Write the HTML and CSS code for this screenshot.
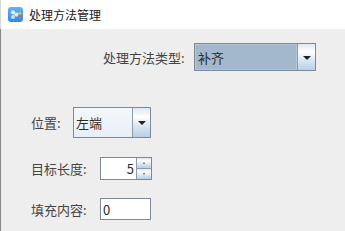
FILE: index.html
```html
<!DOCTYPE html>
<html lang="zh">
<head>
<meta charset="utf-8">
<title>处理方法管理</title>
<link rel="stylesheet" href="styles.css">
</head>
<body>
<div class="window">
  <div class="titlebar">
    <svg class="appicon" width="15" height="15" viewBox="0 0 15 15">
      <defs>
        <linearGradient id="ig" x1="0" y1="0" x2="0" y2="1">
          <stop offset="0" stop-color="#62b2f6"/>
          <stop offset="1" stop-color="#3389e2"/>
        </linearGradient>
      </defs>
      <rect x="0" y="0" width="15" height="15" rx="3" fill="url(#ig)"/>
      <circle cx="5" cy="5.3" r="2.1" fill="#ffffff" fill-opacity="0.85"/>
      <circle cx="5" cy="10" r="2.1" fill="#ffffff" fill-opacity="0.7"/>
      <circle cx="8.4" cy="7.6" r="2.1" fill="#ffffff" fill-opacity="0.8"/>
      <circle cx="11.8" cy="6.6" r="1.5" fill="#f2c230"/>
      <circle cx="12" cy="8.7" r="1.3" fill="#e9543c"/>
      <circle cx="10.6" cy="8.4" r="0.9" fill="#6cc04a"/>
    </svg>
    <span class="title">处理方法管理</span>
  </div>
  <div class="content">
    <div class="row row-type">
      <span class="label label-type">处理方法类型:</span>
      <div class="combo combo-type">
        <div class="combo-text selected">补齐</div>
        <div class="combo-btn"><span class="arrow"></span></div>
      </div>
    </div>
    <div class="row row-pos">
      <span class="label label-pos">位置:</span>
      <div class="combo combo-pos">
        <div class="combo-text plain">左端</div>
        <div class="combo-btn"><span class="arrow"></span></div>
      </div>
    </div>
    <div class="row row-len">
      <span class="label label-field">目标长度:</span>
      <div class="spinner">
        <div class="spin-text">5</div>
        <div class="spin-btns">
          <div class="spin-btn"><span class="tiny up"></span></div>
          <div class="spin-btn"><span class="tiny down"></span></div>
        </div>
      </div>
    </div>
    <div class="row row-fill">
      <span class="label label-field">填充内容:</span>
      <div class="textfield">0</div>
    </div>
  </div>
</div>
</body>
</html>
```

FILE: styles.css
```css
* {
  box-sizing: border-box;
}

html, body {
  margin: 0;
  padding: 0;
  width: 345px;
  height: 231px;
  overflow: hidden;
  background: #eeeeee;
}

body {
  font-family: "Noto Sans CJK SC", "Noto Sans", sans-serif;
  font-size: 13px;
  color: #444444;
}

.window {
  width: 345px;
  height: 231px;
  display: flex;
  flex-direction: column;
}

.titlebar {
  height: 29px;
  background: #ffffff;
  border-left: 1px solid #d6d6d6;
  display: flex;
  align-items: center;
  padding-left: 7px;
}

.appicon {
  display: block;
  flex: none;
}

.title {
  margin-left: 6px;
  font-size: 12px;
  color: #1a1a1a;
  line-height: 1;
}

.content {
  flex: 1;
  border-left: 1px solid #858585;
  display: flex;
  flex-direction: column;
}

.row {
  display: flex;
  align-items: center;
}

.label {
  flex: none;
  line-height: 1;
  white-space: nowrap;
}

.row-type {
  margin-top: 14px;
  padding-left: 102px;
  height: 28px;
}

.label-type {
  width: 91px;
}

.row-pos {
  margin-top: 36px;
  padding-left: 30px;
  height: 31px;
}

.label-pos {
  width: 42px;
}

.row-len {
  margin-top: 19px;
  padding-left: 30px;
  height: 23px;
}

.row-fill {
  margin-top: 18px;
  padding-left: 30px;
  height: 22px;
}

.label-field {
  width: 69px;
}

.combo {
  display: flex;
  height: 100%;
  border: 1px solid #7a8a99;
}

.combo-type {
  width: 122px;
}

.combo-pos {
  width: 78px;
}

.combo-text {
  flex: 1;
  display: flex;
  align-items: center;
  padding-left: 2px;
  line-height: 1;
}

.combo-text.selected {
  background: #a3b8cc;
  border: 1px solid #b3c5d6;
  color: #2a2a2a;
}

.combo-text.plain {
  background: linear-gradient(#f4f8fc, #e6eef7);
  color: #2a2a2a;
}

.combo-btn {
  flex: none;
  width: 18px;
  border-left: 1px solid #8c9cab;
  background: linear-gradient(#dde8f3 0%, #ffffff 30%, #dde8f3 60%, #b8cfe5 100%);
  display: flex;
  align-items: center;
  justify-content: center;
}

.arrow {
  width: 0;
  height: 0;
  border-left: 4px solid transparent;
  border-right: 4px solid transparent;
  border-top: 4px solid #222222;
  margin-top: 1px;
}

.spinner {
  display: flex;
  width: 52px;
  height: 23px;
  border: 1px solid #7a8a99;
  background: #ffffff;
}

.spin-text {
  flex: 1;
  padding-right: 2px;
  display: flex;
  align-items: center;
  justify-content: flex-end;
  line-height: 1;
  color: #2a2a2a;
}

.spin-btns {
  flex: none;
  width: 15px;
  display: flex;
  flex-direction: column;
  border-left: 1px solid #8c9cab;
}

.spin-btn {
  flex: 1;
  background: linear-gradient(#dde8f3 0%, #ffffff 30%, #dde8f3 60%, #b8cfe5 100%);
  display: flex;
  align-items: center;
  justify-content: center;
}

.spin-btn + .spin-btn {
  border-top: 1px solid #8c9cab;
}

.tiny {
  width: 0;
  height: 0;
  border-left: 1.5px solid transparent;
  border-right: 1.5px solid transparent;
}

.tiny.up {
  border-bottom: 2px solid #555555;
}

.tiny.down {
  border-top: 2px solid #555555;
}

.textfield {
  width: 51px;
  height: 22px;
  border: 1px solid #7a8a99;
  background: #ffffff;
  display: flex;
  align-items: center;
  padding-left: 2px;
  line-height: 1;
  color: #2a2a2a;
}
```
